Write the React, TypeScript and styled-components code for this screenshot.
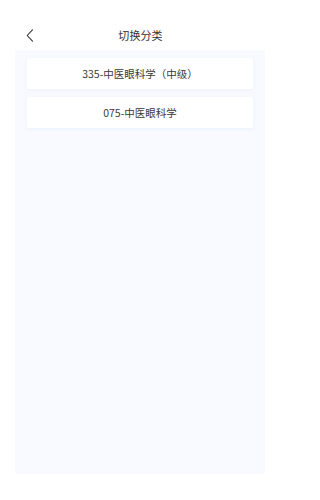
import React from "react";
import styled, { createGlobalStyle } from "styled-components";

const Global = createGlobalStyle`
  html, body { margin: 0; padding: 0; background: #ffffff; }
  body { font-family: "Noto Sans CJK SC", "Noto Sans", sans-serif; }
`;

const Page = styled.div`
  width: 281px;
  height: 500px;
  display: flex;
  flex-direction: column;
  background: #ffffff;
`;

const Header = styled.div`
  position: relative;
  height: 30px;
  margin-top: 20px;
  display: flex;
  align-items: center;
  justify-content: center;
`;

const Back = styled.button`
  position: absolute;
  left: 22px;
  top: 50%;
  transform: translateY(-50%);
  width: 16px;
  height: 20px;
  padding: 0;
  border: 0;
  background: none;
  display: flex;
  align-items: center;
  justify-content: center;
`;

const Title = styled.div`
  font-size: 11px;
  color: #333333;
  letter-spacing: 0.1px;
`;

const Panel = styled.div`
  margin: 0 16px 0 15px;
  height: 424px;
  background: #f8faff;
  padding: 8px 12px;
  box-sizing: border-box;
  display: flex;
  flex-direction: column;
  gap: 8px;
`;

const Card = styled.div`
  height: 31px;
  background: #ffffff;
  border-radius: 2px;
  box-shadow: 0 1px 4px rgba(150, 170, 210, 0.12);
  display: flex;
  align-items: center;
  justify-content: center;
  font-size: 10.5px;
  color: #3a3a3a;
`;

const items = ["335-中医眼科学（中级）", "075-中医眼科学"];

export default function App() {
  return (
    <Page>
      <Global />
      <Header>
        <Back aria-label="back">
          <svg width="8" height="13" viewBox="0 0 8 13">
            <path d="M6.5 0.8 L1.2 6.5 L6.5 12.2" fill="none" stroke="#333" strokeWidth="1.1" strokeLinecap="round" strokeLinejoin="round" />
          </svg>
        </Back>
        <Title>切换分类</Title>
      </Header>
      <Panel>
        {items.map((t) => (
          <Card key={t}>{t}</Card>
        ))}
      </Panel>
    </Page>
  );
}
